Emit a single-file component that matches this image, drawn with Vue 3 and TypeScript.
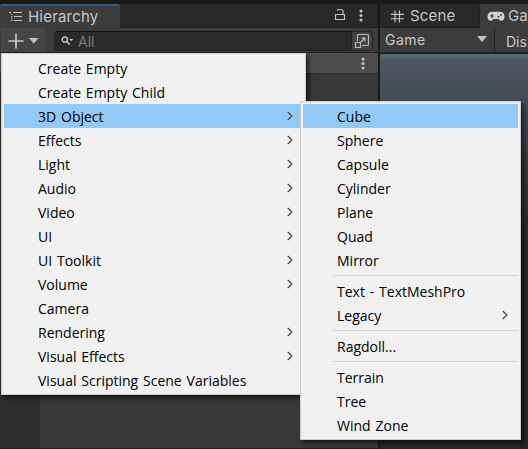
<script setup lang="ts">
interface MenuItem {
  label?: string
  sub?: boolean
  active?: boolean
  separator?: boolean
}

const mainMenu: MenuItem[] = [
  { label: 'Create Empty' },
  { label: 'Create Empty Child' },
  { label: '3D Object', sub: true, active: true },
  { label: 'Effects', sub: true },
  { label: 'Light', sub: true },
  { label: 'Audio', sub: true },
  { label: 'Video', sub: true },
  { label: 'UI', sub: true },
  { label: 'UI Toolkit', sub: true },
  { label: 'Volume', sub: true },
  { label: 'Camera' },
  { label: 'Rendering', sub: true },
  { label: 'Visual Effects', sub: true },
  { label: 'Visual Scripting Scene Variables' },
]

const objectMenu: MenuItem[] = [
  { label: 'Cube', active: true },
  { label: 'Sphere' },
  { label: 'Capsule' },
  { label: 'Cylinder' },
  { label: 'Plane' },
  { label: 'Quad' },
  { label: 'Mirror' },
  { separator: true },
  { label: 'Text - TextMeshPro' },
  { label: 'Legacy', sub: true },
  { separator: true },
  { label: 'Ragdoll...' },
  { separator: true },
  { label: 'Terrain' },
  { label: 'Tree' },
  { label: 'Wind Zone' },
]

const menus = [
  { name: 'main', items: mainMenu },
  { name: 'object', items: objectMenu },
]
</script>

<template>
  <div class="editor">
    <section class="hierarchy">
      <header class="tabs">
        <div class="tab selected">
          <svg class="list-icon" width="14" height="12" viewBox="0 0 14 12" fill="none" stroke="#c4c4c4">
            <path d="M0 1.5h2M4 1.5h9M5 5.5h8M5 9.5h8" stroke-width="1.2" />
            <path d="M2.5 3v7M2.5 5.5h1M2.5 9.5h1" stroke-dasharray="1 1" />
          </svg>
          <span>Hierarchy</span>
        </div>
        <svg class="lock" width="12" height="13" viewBox="0 0 12 13" fill="none" stroke="#c4c4c4">
          <path d="M1.5 6.5h9v5h-9zM3 2.5Q3.3 1.5 4.5 1.5h2.5q2 0 2 2v3" stroke-width="1.2" />
        </svg>
        <svg class="dots" width="4" height="13" viewBox="0 0 4 13" fill="#c4c4c4">
          <circle cx="2" cy="2" r="1.5" /><circle cx="2" cy="6.5" r="1.5" /><circle cx="2" cy="11" r="1.5" />
        </svg>
      </header>
      <div class="toolbar">
        <div class="add">
          <svg width="32" height="16" viewBox="0 0 32 16">
            <path d="M8 .5v15M.5 8h15" stroke="#c8c8c8" stroke-width="1.7" />
            <path d="M21 5h9.5l-4.7 5.5z" fill="#c4c4c4" />
          </svg>
        </div>
        <div class="search">
          <svg width="13" height="10" viewBox="0 0 13 10" fill="none" stroke="#c4c4c4">
            <circle cx="3.8" cy="3.6" r="2.6" stroke-width="1.4" />
            <path d="M5.7 5.5 8.7 8.5" stroke-width="1.6" />
            <path d="M8.3 3h4l-2 2.2z" fill="#c4c4c4" stroke="none" />
          </svg>
          <span>All</span>
        </div>
        <div class="picker">
          <svg width="16" height="16" viewBox="0 0 16 16" fill="none" stroke="#b5b5b5">
            <path d="M3.5 8V2.5q0-1 1-1h9q1 0 1 1v9q0 1-1 1H8" stroke-width="1.2" />
            <path d="M1.5 9.5h5v5h-5zM6.5 9.5l4-4" stroke-width="1.2" />
            <path d="M7 4.5h4.5V9z" fill="#b5b5b5" stroke="none" />
          </svg>
        </div>
      </div>
      <div class="scene-row">
        <svg width="4" height="13" viewBox="0 0 4 13" fill="#c4c4c4">
          <circle cx="2" cy="2" r="1.5" /><circle cx="2" cy="6.5" r="1.5" /><circle cx="2" cy="11" r="1.5" />
        </svg>
      </div>
      <div class="tree"></div>
    </section>

    <section class="view">
      <header class="tabs">
        <div class="tab scene-tab">
          <svg width="13" height="13" viewBox="0 0 13 13" stroke="#c4c4c4" stroke-width="1.15">
            <path d="M4 .5v12M8.5 .5v12M0 4.3h13M0 8.7h13" />
          </svg>
          <span>Scene</span>
        </div>
        <div class="tab game-tab">
          <svg width="18" height="11" viewBox="0 0 18 11">
            <path d="M5 .8h8a4.500 4.500 0 0 1 4.500 4.500c0 2.800-1.300 4.500-3.200 4.500-1.200 0-1.900-.8-2.600-1.800H6.300c-.7 1-1.400 1.800-2.600 1.800C1.800 9.800.5 8.100.5 5.300A4.500 4.500 0 0 1 5 .8z" fill="#d2d2d2" />
            <path d="M5 3v4M3 5h4" stroke="#3c3c3c" stroke-width="1.2" />
            <circle cx="11.6" cy="5.7" r="1" fill="#3c3c3c" /><circle cx="14" cy="4" r="1" fill="#3c3c3c" />
          </svg>
          <span>Ga</span>
        </div>
      </header>
      <div class="toolbar">
        <div class="mode">
          <span>Game</span>
          <svg width="10" height="6" viewBox="0 0 10 6"><path d="M0 0h10L5 6z" fill="#c4c4c4" /></svg>
        </div>
        <div class="display">Dis</div>
      </div>
      <div class="render"></div>
    </section>

    <nav v-for="menu in menus" :key="menu.name" class="menu" :class="menu.name">
      <template v-for="(item, i) in menu.items" :key="i">
        <div v-if="item.separator" class="separator"></div>
        <div v-else class="item" :class="{ active: item.active }">
          <span>{{ item.label }}</span>
          <svg v-if="item.sub" width="6" height="10" viewBox="0 0 6 10" fill="none" stroke="#444" stroke-width="1.2">
            <path d="M.8 1 4.8 5 .8 9" />
          </svg>
        </div>
      </template>
    </nav>
  </div>
</template>

<style>
body {
  background: #191919;
  overflow: hidden;
}
</style>

<style scoped>
.editor {
  position: relative;
  box-sizing: border-box;
  width: 528px;
  height: 449px;
  padding-top: 4px;
  display: flex;
  gap: 2px;
  overflow: hidden;
  background: #191919;
  color: #c8c8c8;
  font: 15px/20px Inter, sans-serif;
}
.editor * {
  box-sizing: border-box;
}
svg {
  display: block;
  flex: none;
}
.hierarchy {
  width: 378px;
  flex: none;
  display: flex;
  flex-direction: column;
}
.view {
  width: 148px;
  flex: none;
  display: flex;
  flex-direction: column;
  overflow: hidden;
}
.tabs {
  height: 24px;
  flex: none;
  display: flex;
  align-items: center;
  background: #282828;
  border-bottom: 1px solid #202020;
  border-radius: 3px 3px 0 0;
}
.tab {
  height: 24px;
  display: flex;
  align-items: center;
  flex: none;
  align-self: flex-start;
}
.tab span {
  letter-spacing: 0.2px;
}
.tab.selected {
  width: 120px;
  padding-left: 9px;
  gap: 5px;
  background: #3c3c3c;
  border-top: 2px solid #2c5d87;
  border-radius: 3px 3px 0 0;
}
.lock {
  margin-left: 214px;
  margin-top: -2px;
}
.dots {
  margin-left: 13px;
}
.toolbar {
  height: 25px;
  flex: none;
  display: flex;
  background: #3c3c3c;
  border-bottom: 1px solid #232323;
}
.add {
  width: 44px;
  margin-left: 1px;
  padding: 5px 0 0 7px;
  background: #464646;
}
.search {
  width: 298px;
  height: 20px;
  margin: 3px 0 0 9px;
  padding-left: 6px;
  display: flex;
  align-items: center;
  gap: 4px;
  background: #2a2a2a;
  border: 1px solid #212121;
  border-top-color: #0d0d0d;
  border-radius: 4px 0 0 4px;
  color: #7c7c7c;
  font-size: 14px;
}
.search span {
  padding-top: 1px;
}
.picker {
  width: 21px;
  height: 20px;
  margin-top: 3px;
  padding: 1px 0 0 2px;
  border: 1px solid #242424;
  border-left: 0;
  border-radius: 0 5px 5px 0;
  background: #414141;
}
.scene-row {
  height: 21px;
  flex: none;
  padding: 4px 13px 0 0;
  display: flex;
  justify-content: flex-end;
  background: #4d4d4d;
  border-bottom: 1px solid #2b2b2b;
}
.tree {
  flex: 1;
  background: linear-gradient(90deg, #2d2d2d 40px, #383838 40px);
  border-bottom: 1px solid #231f20;
}
.scene-tab {
  width: 100px;
  padding-left: 11px;
  gap: 6px;
  border-right: 1px solid #202020;
}
.game-tab {
  width: 48px;
  padding-left: 7px;
  gap: 3px;
  background: #3c3c3c;
  border-radius: 3px 0 0 0;
}
.game-tab span {
  letter-spacing: 0;
}
.mode {
  width: 114px;
  margin-left: 1px;
  padding: 0 7px 0 4px;
  display: flex;
  justify-content: space-between;
  align-items: center;
  border-right: 1px solid #222;
  flex: none;
}
.mode svg {
  margin-top: -3px;
}
.mode span,
.display {
  font-size: 14px;
  line-height: 28px;
}
.mode span {
  letter-spacing: 0.5px;
}
.display {
  padding-left: 11px;
  white-space: nowrap;
}
.render {
  flex: 1;
  margin-top: 1px;
  border-top: 1px solid #5b6c73;
  background: linear-gradient(180deg, #566970 0, #4b5862 5px, #444c55 45px, #34383e 110px, #292727 190px, #292624 100%);
}
.menu {
  position: absolute;
  padding: 2px;
  background: #f1f1f1;
  border: 1px solid #ccc;
  box-shadow: 3px 3px 4px rgba(0, 0, 0, 0.55);
  color: #000;
  font: 14px/24px "Open Sans", "Noto Sans", sans-serif;
  word-spacing: 1.2px;
}
.main {
  left: 1px;
  top: 53px;
  width: 305px;
}
.object {
  left: 300px;
  top: 101px;
  width: 221px;
}
.item {
  height: 24px;
  padding: 0 10px 0 34px;
  display: flex;
  justify-content: space-between;
  align-items: center;
  white-space: nowrap;
}
.item span {
  padding-top: 2px;
}
.active {
  background: #91c9f7;
}
.separator {
  height: 7px;
  padding: 3px 0;
  margin-left: 30px;
  background: #d4d4d4 content-box;
}
</style>
